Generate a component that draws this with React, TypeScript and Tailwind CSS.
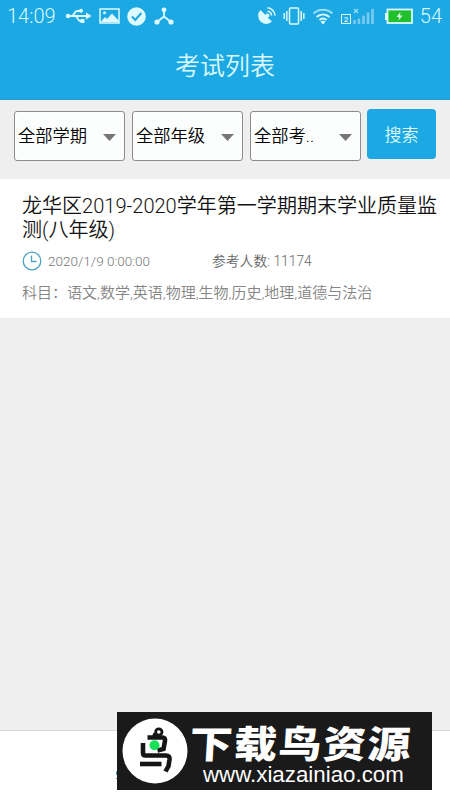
import React from 'react';

const filters = ['全部学期', '全部年级', '全部考..'];

const StatusBar: React.FC = () => (
  <div className="flex h-8 items-center text-[#dcfaff]">
    <span className="ml-[7px] w-[50px] text-[20px] font-light leading-8">14:09</span>

    {/* USB */}
    <svg className="ml-[8px] h-4 w-[27px]" viewBox="0 0 27 16" fill="none" stroke="currentColor" strokeWidth="1.8">
      <circle cx="3" cy="8" r="2.2" fill="currentColor" stroke="none" />
      <path d="M3 8H22M6.500 8C9 8 9.500 3 12 3H15M10 8C13 8 12.500 13 15 13H17" />
      <path d="M21 4.500L26.500 8L21 11.500Z" fill="currentColor" stroke="none" />
      <circle cx="16" cy="2.800" r="2" fill="currentColor" stroke="none" />
      <path d="M15.500 11H19.500V15H15.500Z" fill="currentColor" stroke="none" />
    </svg>

    {/* Picture */}
    <svg className="ml-[7px] h-4 w-[21px]" viewBox="0 0 21 16" fill="none" stroke="currentColor" strokeWidth="1.5">
      <rect x="1" y="1" width="19" height="14" />
      <path d="M2 13.500L6 9L8 11L13 5.500L19 12V14H2Z" fill="currentColor" stroke="none" />
      <circle cx="5.500" cy="4.800" r="1.500" fill="currentColor" stroke="none" />
    </svg>

    {/* Check */}
    <svg className="ml-[7px] h-[19px] w-[19px]" viewBox="0 0 19 19">
      <circle cx="9.500" cy="9.500" r="9.300" fill="currentColor" />
      <path d="M5 9.500L8.300 13L14.300 6" fill="none" stroke="#1ca8e3" strokeWidth="2" />
    </svg>

    {/* Hub */}
    <svg className="ml-[8px] h-[18px] w-[20px]" viewBox="0 0 20 18" fill="currentColor">
      <path d="M10 3V9.500L3 15M10 9.500L17 15" fill="none" stroke="currentColor" strokeWidth="1.800" />
      <circle cx="10" cy="2.800" r="2.400" />
      <circle cx="3" cy="15" r="2.600" />
      <circle cx="17" cy="15" r="2.600" />
    </svg>

    <div className="flex-1" />

    {/* Satellite dish */}
    <svg className="h-5 w-[20px]" viewBox="0 0 20 20">
      <path d="M3.500 4A8 8 0 1 0 15 15.500L10.500 11.500A2 2 0 1 0 8.500 9Z" fill="currentColor" />
      <path d="M10.500 5.300A4.500 4.500 0 0 1 14.500 9.500M10.500 1.800A8 8 0 0 1 18 9.500" fill="none" stroke="currentColor" strokeWidth="1.600" />
    </svg>

    {/* Vibrate */}
    <svg className="ml-[6px] h-5 w-[22px]" viewBox="0 0 22 20" fill="none" stroke="currentColor" strokeWidth="1.500">
      <rect x="6.500" y="2" width="9" height="16" rx="1" />
      <path d="M3.800 5V15M1.200 7V13M18.200 5V15M20.800 7V13" />
    </svg>

    {/* Wifi */}
    <svg className="ml-[7px] h-[17px] w-[22px]" viewBox="0 0 22 17" fill="none" stroke="currentColor" strokeWidth="2">
      <path d="M1.500 5.500C7 .5 15 .5 20.500 5.500" strokeOpacity="0.65" />
      <path d="M4.500 9C8.500 5.500 13.500 5.500 17.500 9M7.500 12C9.500 10.300 12.500 10.300 14.500 12" />
      <path d="M8.500 13.500Q11 12 13.500 13.500L11 16.500Z" fill="currentColor" stroke="none" />
    </svg>

    {/* Signal of the second SIM */}
    <svg className="ml-[6px] h-[17px] w-[35px]" viewBox="0 0 35 17" fill="none">
      <rect x="1.500" y="6.500" width="9" height="9" stroke="currentColor" strokeWidth="1" />
      <text x="6" y="14" textAnchor="middle" fontSize="8" fontWeight="500" fill="currentColor">2</text>
      <path d="M14 1L18 5M18 1L14 5" stroke="#9cdcf4" strokeWidth="1.200" />
      <path d="M14.500 12V16M19 10.500V16M23.500 7.500V16M28 4.500V16M32.500 1V16" stroke="#7ccbef" strokeWidth="2.600" />
    </svg>

    {/* Battery */}
    <svg className="ml-[10px] h-4 w-[28px]" viewBox="0 0 28 16">
      <rect x="0" y="5" width="3" height="7" fill="currentColor" />
      <rect x="2.500" y="1.500" width="24.500" height="13.500" fill="#20c12c" stroke="currentColor" strokeWidth="1.800" />
      <path d="M15.500 4L11.500 9H14.200L13.500 12.500L17.500 7.500H14.800Z" fill="#e5fff0" />
    </svg>
    <span className="ml-[7px] mr-[8px] text-[20px] font-light leading-8">54</span>
  </div>
);

const BirdLogo: React.FC = () => (
  <svg className="h-[66px] w-[66px]" viewBox="0 0 66 66">
    <circle cx="33" cy="33" r="32.500" fill="#fff" />
    <g fill="none" stroke="#151515" strokeWidth="4.600">
      <path d="M25.500 19.500H40.500Q43.500 19.500 43 23L41.500 31L35.500 32.500" />
      <path d="M21 25V35Q21 37.500 23.500 37.500H44Q48 37.500 47.500 41.500L46.500 48L43.500 53.500" />
      <path d="M18 46H39.500" />
      <path d="M32 20L33.500 15.500" />
      <circle cx="36.800" cy="14" r="3.200" strokeWidth="2.800" />
    </g>
    <circle cx="32.500" cy="27.300" r="5" fill="#19df57" />
  </svg>
);

const App: React.FC = () => {
  return (
    <div className="relative flex h-[800px] w-[450px] flex-col overflow-hidden bg-[#efefef] font-['Roboto','Noto_Sans_CJK_SC',sans-serif]">
      <header className="h-[100px] border-b border-[#2c9bcb] bg-[#1ca8e3]">
        <StatusBar />
        <h1 className="pt-[17px] text-center text-[25px] font-[350] leading-[36px] text-[#dcfaff]">考试列表</h1>
      </header>

      <div className="flex h-[79px] items-start pl-[14px] pt-[9px]">
        {filters.map((label) => (
          <button
            key={label}
            className="mr-[7px] mt-[2px] flex h-[50px] w-[111px] items-center justify-between rounded-[3px] border border-[#8c8c8c] bg-[#fcfefe] pl-[3px] pr-[8px] text-[17.3px] text-black"
          >
            <span className="whitespace-nowrap pt-px font-[350]">{label}</span>
            <svg className="mt-[2px] h-[7px] w-[13px]" viewBox="0 0 13 7">
              <path d="M0 0H13L6.500 7Z" fill="#767676" />
            </svg>
          </button>
        ))}
        <button className="-ml-px h-[50px] w-[69px] rounded-[4px] bg-[#1ca8e3] pt-[3px] text-[17px] font-[350] text-[#dcfaff]">
          搜索
        </button>
      </div>

      <article className="h-[139px] bg-white pl-[22px] pt-[15px]">
        <h2 className="w-[425px] whitespace-nowrap text-[20.05px] font-[350] leading-[24px] text-[#111]">
          龙华区2019-2020学年第一学期期末学业质量监
          <br />
          测(八年级)
        </h2>
        <div className="mt-[9px] flex h-[20px] items-center leading-5">
          <svg className="h-5 w-5" viewBox="0 0 20 20" fill="none" stroke="#4ba3c3" strokeWidth="1.300">
            <circle cx="10" cy="10" r="8.800" />
            <path d="M9.500 4.500V10.500H14.500" />
          </svg>
          <span className="ml-[6px] w-[164px] text-[13.5px] font-light text-[#777]">2020/1/9 0:00:00</span>
          <span className="text-[13.8px] font-[350] text-[#666]">参考人数: 11174</span>
        </div>
        <p className="mt-[12px] whitespace-nowrap text-[15px] font-[350] leading-5 text-[#858585]">
          科目：语文,数学,英语,物理,生物,历史,地理,道德与法治
        </p>
      </article>

      <div className="flex-1" />
      <footer className="h-[70px] border-t border-[#d8d8d8] bg-white pl-[115px] pt-[40px]">
        <svg className="h-[9px] w-[6px]" viewBox="0 0 6 9" fill="none" stroke="#4b9db5">
          <path d="M5 .5H1.500V4M1 7.500H5" />
        </svg>
      </footer>

      {/* Site badge floating over the bottom bar */}
      <div className="absolute left-[117px] top-[712px] flex h-[78px] w-[315px] items-center bg-[#1a1a1a] pl-[5px] text-white">
        <BirdLogo />
        <div className="ml-[2px] flex h-full flex-col">
          <span className="-skew-x-3 scale-y-[0.88] whitespace-nowrap pt-[7px] font-['Noto_Sans_CJK_SC',sans-serif] text-[43px] font-black leading-[46px] tracking-[1.5px]">
            下载鸟资源
          </span>
          <span className="ml-[13px] font-['Liberation_Sans',sans-serif] text-[22.3px] leading-5">
            www.xiazainiao.com
          </span>
        </div>
      </div>
    </div>
  );
};

export default App;
